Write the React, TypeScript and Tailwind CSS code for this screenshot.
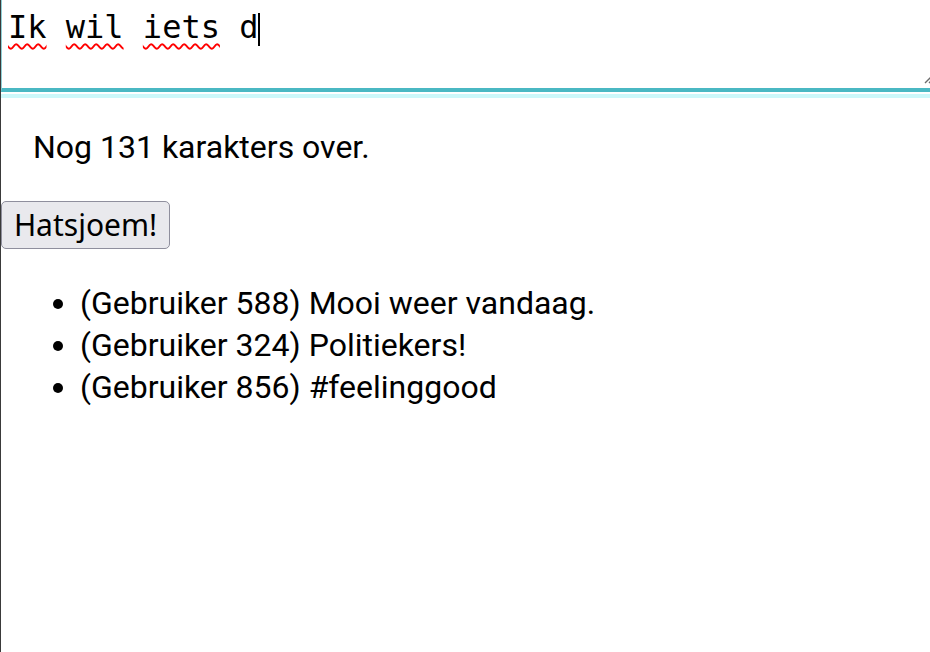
import React from "react";

const posts = [
  { user: 588, text: "Mooi weer vandaag." },
  { user: 324, text: "Politiekers!" },
  { user: 856, text: "#feelinggood" },
];

function ResizeHandle() {
  return (
    <svg className="absolute right-[2px] bottom-[4px]" width="12" height="12" viewBox="0 0 12 12">
      <path d="M11 3 L3 11 M11 7 L7 11" stroke="#6b6b6b" strokeWidth="1.4" />
    </svg>
  );
}

export default function App() {
  return (
    <div className="w-[930px] h-[652px] overflow-hidden bg-white border-l border-[#3a3a3a] font-['Roboto',sans-serif] text-black">
      {/* fake textarea (focused) */}
      <div className="relative w-[935px] h-[92px] border-l border-b-4 border-l-[#8fd0d6] border-b-[#4ab8c3] pl-[6px] pt-[8px]">
        <div className="font-['DejaVu_Sans_Mono',monospace] text-[32px] leading-[38px] whitespace-pre">
          <span className="underline decoration-wavy decoration-[#ff0000] decoration-2 underline-offset-[5px]">Ik</span>{" "}
          <span className="underline decoration-wavy decoration-[#ff0000] decoration-2 underline-offset-[5px]">wil</span>{" "}
          <span className="underline decoration-wavy decoration-[#ff0000] decoration-2 underline-offset-[5px]">iets</span>{" "}
          d<span className="inline-block w-[2px] h-[33px] bg-black align-[-8px]" />
        </div>
        <ResizeHandle />
      </div>
      <div className="mt-[2px] h-[4px] bg-[#ccf8fa]" />

      <p className="mt-[28px] pl-[32px] text-[32px] leading-[42px]">Nog 131 karakters over.</p>

      <button className="mt-[33px] h-[48px] w-[169px] rounded-[5px] border border-[#8f8f9d] bg-[#e9e9ed] font-['Noto_Sans',sans-serif] text-[30px] leading-[36px]">
        Hatsjoem!
      </button>

      <ul className="mt-[33px] pl-[79px] list-disc text-[32px] leading-[42px]">
        {posts.map((p) => (
          <li key={p.user}>
            (Gebruiker {p.user}) {p.text}
          </li>
        ))}
      </ul>
    </div>
  );
}
